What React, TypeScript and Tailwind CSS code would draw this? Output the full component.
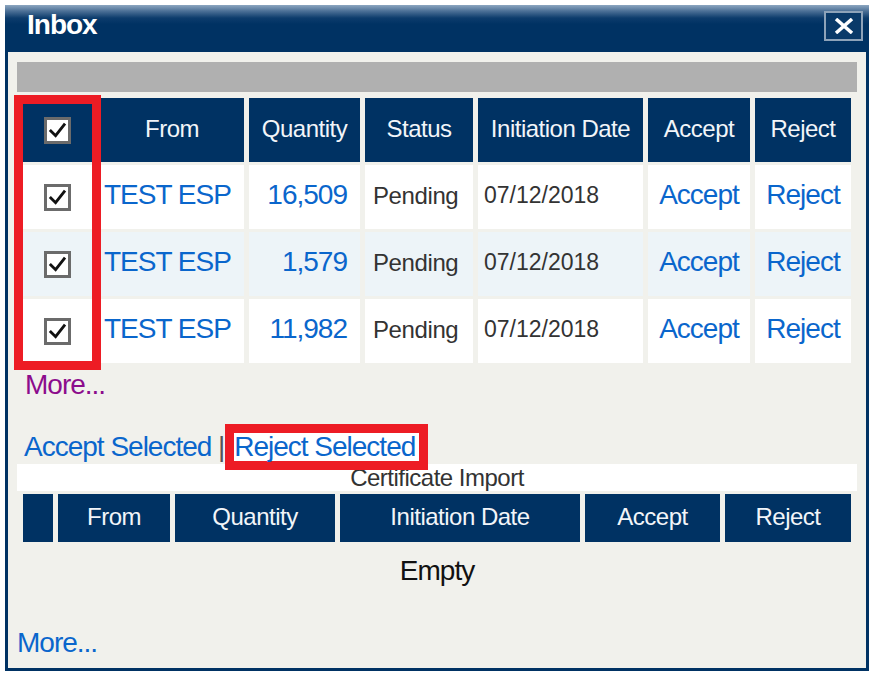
import type { ReactNode } from 'react'

// Inbox popup: pending transfers with bulk accept/reject, plus an empty
// certificate import list underneath.
const rows = [
  { from: 'TEST ESP', qty: '16,509', status: 'Pending', date: '07/12/2018', bg: 'bg-white' },
  { from: 'TEST ESP', qty: '1,579', status: 'Pending', date: '07/12/2018', bg: 'bg-[#edf4f8]' },
  { from: 'TEST ESP', qty: '11,982', status: 'Pending', date: '07/12/2018', bg: 'bg-white' },
]

const linkText = 'text-[28px] tracking-[-1px] text-[#0a66cc] cursor-pointer'
const headText = 'text-[24px] tracking-[-0.5px] text-[#f2f5f9]'

function Checkbox() {
  return (
    <span className="flex h-[27px] w-[27px] items-center justify-center border-[3px] border-[#6b6b6b] bg-white">
      <svg width="19" height="19" viewBox="0 0 20 20" fill="none">
        <path d="M3 10.5 L8 15.5 L17 4" stroke="#111" strokeWidth="3" strokeLinecap="square" />
      </svg>
    </span>
  )
}

function Head({ children }: { children?: ReactNode }) {
  return (
    <div className={`flex items-center justify-center bg-[#003263] pb-[3px] ${headText}`}>
      {children}
    </div>
  )
}

export default function App() {
  return (
    <div className="h-[679px] w-[874px] bg-white pl-[5px] pt-[5px] font-['Liberation_Sans',Arial,sans-serif]">
      <div className="flex w-[864px] flex-col">
        {/* title bar */}
        <div className="flex h-[47px] items-start justify-between bg-[linear-gradient(to_bottom,#8ca6c0_0px,#4d7197_6px,#0d3c6c_13px,#003263_19px)] pl-[22px] pr-[6px]">
          <span className="mt-[4px] text-[28px] font-bold leading-[32px] tracking-[-1px] text-white">Inbox</span>
          <span className="mt-[6px] flex h-[30px] w-[39px] items-center justify-center border-2 border-[#8ea3b9] bg-[#0a3a69]">
            <svg width="20" height="16" viewBox="0 0 20 16">
              <path d="M2 1 L18 15 M18 1 L2 15" stroke="white" strokeWidth="3.5" />
            </svg>
          </span>
        </div>

        {/* body */}
        <div className="flex h-[619px] flex-col border-x-[3px] border-b-[3px] border-[#003263] bg-[#f1f1ec]">
          <div className="mx-[9px] mt-[10px] h-[30px] bg-[#b0b0b0]" />

          <div className="relative ml-[15px] mt-[6px] grid w-[828px] auto-rows-[64px] grid-cols-[72px_144px_111px_108px_165px_102px_96px] gap-x-[5px] gap-y-[3px]">
            <div className="flex items-center justify-center bg-[#003263] pr-[3px]">
              <Checkbox />
            </div>
            <Head>From</Head>
            <Head>Quantity</Head>
            <Head>Status</Head>
            <Head>Initiation Date</Head>
            <Head>Accept</Head>
            <Head>Reject</Head>
            {rows.map((r, i) => (
              <div key={i} className="contents">
                <div className={`flex items-center justify-center pr-[3px] ${r.bg}`}>
                  <Checkbox />
                </div>
                <div className={`flex items-center pb-[4px] pl-[4px] ${r.bg} ${linkText}`}>{r.from}</div>
                <div className={`flex items-center justify-end pb-[4px] pr-[13px] ${r.bg} ${linkText}`}>{r.qty}</div>
                <div className={`flex items-center pb-[3px] pl-[8px] text-[24px] tracking-[-0.4px] text-[#333] ${r.bg}`}>{r.status}</div>
                <div className={`flex items-center pb-[3px] pl-[6px] text-[23px] text-[#333] ${r.bg}`}>{r.date}</div>
                <div className={`flex items-center justify-center pb-[4px] ${r.bg} ${linkText}`}>Accept</div>
                <div className={`flex items-center justify-center pb-[4px] ${r.bg} ${linkText}`}>Reject</div>
              </div>
            ))}
            {/* red annotation around the checkbox column */}
            <div className="pointer-events-none absolute left-[-9px] top-[-3px] h-[275px] w-[87px] border-[9px] border-[#ed1c24]" />
          </div>

          <div className="ml-[17px] mt-[7px] text-[28px] leading-[30px] tracking-[-1px] text-[#8c0c8c]">More...</div>

          <div className="relative z-10 ml-[16px] mt-[33px] flex h-[28px] items-center text-[28px] leading-[28px] tracking-[-1px]">
            <span className="text-[#0a66cc]">Accept Selected</span>
            <span className="whitespace-pre text-[#555]"> | </span>
            {/* red annotation box around the reject link */}
            <span className="-my-[9px] ml-[-6px] inline-block h-[46px] border-[9px] border-[#ed1c24] bg-white pr-[4px] leading-[28px] text-[#0a66cc]">
              Reject Selected
            </span>
          </div>

          <div className="mx-[9px] mt-[3px] h-[27px] bg-white text-center text-[24px] leading-[27px] tracking-[-0.5px] text-[#333]">
            Certificate Import
          </div>

          <div className="ml-[15px] mt-[3px] grid h-[48px] w-[828px] grid-cols-[30px_112px_160px_240px_135px_126px] gap-x-[5px]">
            <Head />
            <Head>From</Head>
            <Head>Quantity</Head>
            <Head>Initiation Date</Head>
            <Head>Accept</Head>
            <Head>Reject</Head>
          </div>

          <div className="mt-[13px] text-center text-[28px] leading-[32px] tracking-[-1px] text-[#111]">Empty</div>

          <div className="ml-[9px] mt-[41px] text-[28px] leading-[30px] tracking-[-1px] text-[#0a66cc]">More...</div>
        </div>
      </div>
    </div>
  )
}
